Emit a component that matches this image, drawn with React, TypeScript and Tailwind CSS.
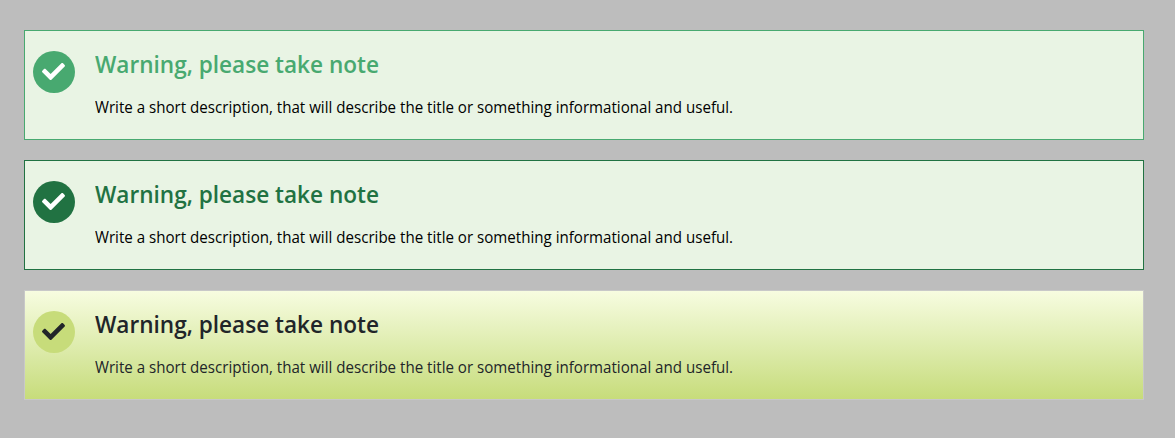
import { FaCheck } from "react-icons/fa";

const alerts = [
  { box: "border-[#48a970] bg-[#e9f4e4]", icon: "bg-[#48a970] text-white", title: "text-[#48a970]", body: "text-black" },
  { box: "border-[#217242] bg-[#e9f4e4]", icon: "bg-[#217242] text-white", title: "text-[#217242]", body: "text-black" },
  { box: "border-[#c8c8c8] bg-linear-to-b from-[#f7fce0] to-[#c7dc7a]", icon: "bg-[#c7dc7a] text-[#212529]", title: "text-[#212529]", body: "text-[#212529]" },
];

export default function App() {
  return (
    <main className="flex h-[438px] w-[1175px] flex-col gap-5 bg-[#bdbdbd] pt-[30px] pl-6 font-['Open_Sans',sans-serif]">
      {alerts.map((a, i) => (
        <section key={i} className={`flex h-[110px] w-[1120px] border pt-5 pl-2 ${a.box}`}>
          <div className={`flex size-[42px] shrink-0 items-center justify-center rounded-full pr-px pb-px ${a.icon}`}>
            <FaCheck className="size-[23px]" />
          </div>
          <div className="ml-5 w-[700px]">
            <h2 className={`-mt-[2px] origin-left scale-x-[0.941] text-[24px] leading-[29px] font-semibold whitespace-nowrap ${a.title}`}>
              Warning, please take note
            </h2>
            <p className={`mt-[17px] origin-left scale-x-[0.944] text-[16px] leading-[24px] whitespace-nowrap ${a.body}`}>
              Write a short description, that will describe the title or something informational and useful.
            </p>
          </div>
        </section>
      ))}
    </main>
  );
}
